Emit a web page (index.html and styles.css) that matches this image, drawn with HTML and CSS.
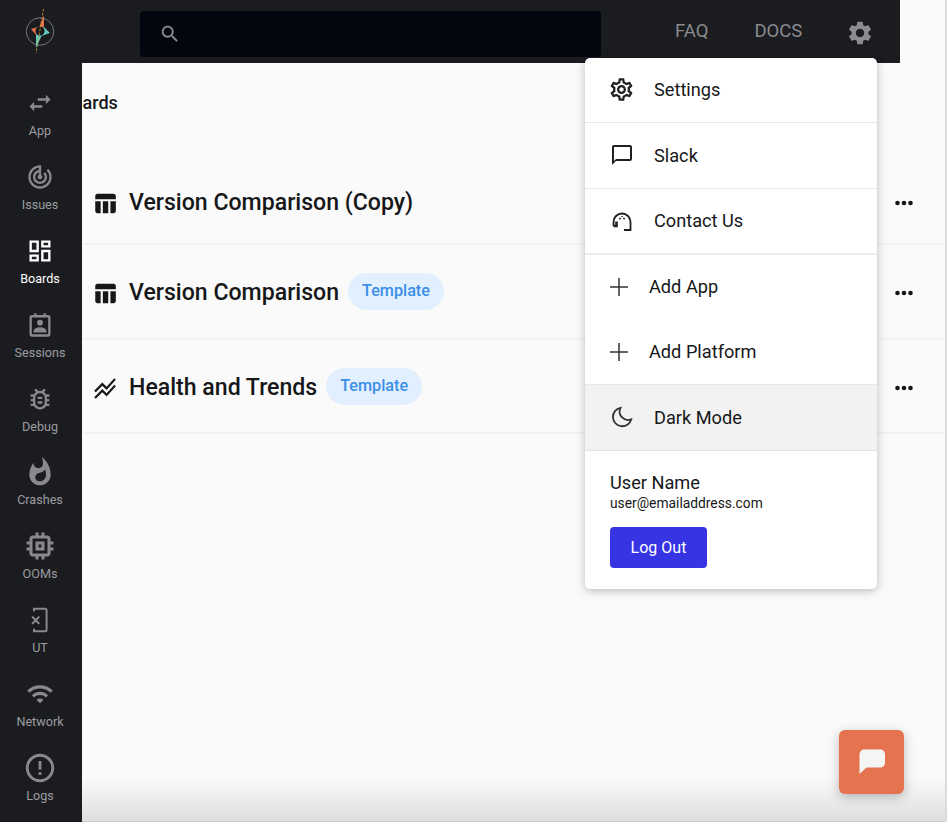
FILE: index.html
```html
<!DOCTYPE html>
<html lang="en">
<head>
    <meta charset="UTF-8">
    <meta name="viewport" content="width=device-width, initial-scale=1.0">
    <title>Boards</title>
    <link rel="stylesheet" href="styles.css">
</head>
<body>
    <div class="app">
        <aside class="sidebar">
            <div class="logo">
                <svg width="50" height="50" viewBox="15 5 50 50">
                    <circle cx="40" cy="30.5" r="13.7" fill="none" stroke="#8c8d8f" stroke-width="0.8"/>
                    <path d="M44 14L44 26L36 34L31 28L39.500 25.500Z" fill="#e57350"/>
                    <path d="M44 26L50 32L41.500 35L36 47L36 34Z" fill="#63c7bd"/>
                    <circle cx="40" cy="30" r="4.600" fill="#1a1c20"/>
                    <path d="M43.500 8L36 52" stroke="#d6a528" stroke-width="0.8" stroke-dasharray="2.500 1.500"/>
                </svg>
            </div>
            <nav class="nav">
                <a class="nav-item">
                    <svg viewBox="0 0 24 24"><path d="M6.990 11L3 15l3.990 4v-3H14v-2H6.990v-3zM21 9l-3.990-4v3H10v2h7.010v3L21 9z"/></svg>
                    <span>App</span>
                </a>
                <a class="nav-item">
                    <svg viewBox="0 0 24 24"><path d="M19.070 4.930l-1.410 1.410C19.100 7.790 20 9.790 20 12c0 4.420-3.580 8-8 8s-8-3.580-8-8c0-4.080 3.050-7.440 7-7.930v2.020C8.160 6.570 6 9.030 6 12c0 3.310 2.690 6 6 6s6-2.690 6-6c0-1.660-.67-3.160-1.760-4.240l-1.410 1.410C15.550 9.900 16 10.900 16 12c0 2.210-1.790 4-4 4s-4-1.790-4-4c0-1.860 1.280-3.410 3-3.860v2.140c-.6.35-1 .98-1 1.720 0 1.100.9 2 2 2s2-.9 2-2c0-.74-.4-1.380-1-1.720V2h-1C6.480 2 2 6.480 2 12s4.480 10 10 10 10-4.480 10-10c0-2.760-1.120-5.260-2.930-7.070z"/></svg>
                    <span>Issues</span>
                </a>
                <a class="nav-item active">
                    <svg viewBox="0 0 24 24"><path d="M19 5v2h-4V5h4M9 5v6H5V5h4m10 8v6h-4v-6h4M9 17v2H5v-2h4M21 3h-8v6h8V3zM11 3H3v10h8V3zm10 8h-8v10h8V11zm-10 4H3v6h8v-6z"/></svg>
                    <span>Boards</span>
                </a>
                <a class="nav-item">
                    <svg viewBox="0 0 24 24"><path d="M7 2h2v1.500h6V2h2v1.500h2c1.100 0 2 .9 2 2V20c0 1.100-.9 2-2 2H5c-1.100 0-2-.9-2-2V5.500c0-1.100.9-2 2-2h2V2zM5 5.500V20h14V5.500H5z"/><circle cx="12" cy="10" r="2.500"/><path d="M6.500 17.500c0-2.300 3.100-3.500 5.500-3.500s5.500 1.200 5.500 3.500V18.500h-11v-1z"/></svg>
                    <span>Sessions</span>
                </a>
                <a class="nav-item">
                    <svg viewBox="0 0 24 24"><path d="M20 8h-2.810c-.45-.78-1.070-1.450-1.820-1.960L17 4.410 15.590 3l-2.170 2.170C12.960 5.060 12.490 5 12 5s-.96.06-1.410.17L8.410 3 7 4.410l1.620 1.630C7.880 6.550 7.260 7.220 6.810 8H4v2h2.090c-.05.33-.09.66-.09 1v1H4v2h2v1c0 .34.04.67.09 1H4v2h2.810c1.040 1.790 2.970 3 5.190 3s4.150-1.210 5.190-3H20v-2h-2.090c.05-.33.09-.66.09-1v-1h2v-2h-2v-1c0-.34-.04-.67-.09-1H20V8zm-4 7c0 2.210-1.790 4-4 4s-4-1.790-4-4v-4c0-2.210 1.790-4 4-4s4 1.790 4 4v4zm-6-1h4v2h-4zm0-4h4v2h-4z"/></svg>
                    <span>Debug</span>
                </a>
                <a class="nav-item">
                    <svg class="icon-32" viewBox="0 0 24 24"><path d="M13.500.67s.74 2.650.74 4.800c0 2.060-1.350 3.730-3.410 3.730-2.070 0-3.630-1.670-3.630-3.730l.03-.36C5.210 7.510 4 10.620 4 14c0 4.420 3.580 8 8 8s8-3.580 8-8C20 8.610 17.410 3.800 13.500.67zM11.710 19c-1.780 0-3.220-1.400-3.220-3.140 0-1.620 1.050-2.760 2.810-3.120 1.770-.36 3.600-1.210 4.620-2.580.39 1.290.59 2.650.59 4.040 0 2.650-2.150 4.800-4.800 4.800z"/></svg>
                    <span>Crashes</span>
                </a>
                <a class="nav-item">
                    <svg class="icon-36" viewBox="0 0 24 24"><path d="M15 9H9v6h6V9zm-2 4h-2v-2h2v2zm8-2V9h-2V7c0-1.100-.9-2-2-2h-2V3h-2v2h-2V3H9v2H7c-1.100 0-2 .9-2 2v2H3v2h2v2H3v2h2v2c0 1.100.9 2 2 2h2v2h2v-2h2v2h2v-2h2c1.100 0 2-.9 2-2v-2h2v-2h-2v-2h2zm-4 6H7V7h10v10z"/></svg>
                    <span>OOMs</span>
                </a>
                <a class="nav-item">
                    <svg viewBox="0 0 24 24"><path d="M6 1.500h10.500c1.100 0 2 .9 2 2v17c0 1.100-.9 2-2 2H6v-3h1.700v1.300h9.100V3.200H7.700v1.300H6v-3z"/><path d="M5.800 8.500l2.500 2.500 2.500-2.500 1.200 1.200L9.500 12.200l2.500 2.500-1.200 1.200-2.500-2.500-2.500 2.500-1.200-1.200 2.500-2.500-2.500-2.500z"/></svg>
                    <span>UT</span>
                </a>
                <a class="nav-item">
                    <svg viewBox="0 0 24 24"><path d="M1 9l2 2c4.970-4.970 13.030-4.970 18 0l2-2C16.930 2.930 7.080 2.930 1 9zm8 8l3 3 3-3c-1.650-1.660-4.340-1.660-6 0zm-4-4l2 2c2.760-2.760 7.240-2.760 10 0l2-2C15.140 9.140 8.870 9.140 5 13z"/></svg>
                    <span>Network</span>
                </a>
                <a class="nav-item">
                    <svg class="icon-34" viewBox="0 0 24 24"><path d="M11 15h2v2h-2zm0-8h2v6h-2zm.99-5C6.470 2 2 6.480 2 12s4.470 10 9.990 10C17.520 22 22 17.520 22 12S17.520 2 11.990 2zM12 20c-4.420 0-8-3.580-8-8s3.580-8 8-8 8 3.580 8 8-3.580 8-8 8z"/></svg>
                    <span>Logs</span>
                </a>
            </nav>
        </aside>

        <main class="main">
            <header class="topbar">
                <div class="search">
                    <svg viewBox="0 0 24 24"><path d="M15.500 14h-.79l-.28-.27C15.410 12.590 16 11.110 16 9.500 16 5.910 13.090 3 9.500 3S3 5.910 3 9.500 5.910 16 9.500 16c1.610 0 3.090-.59 4.230-1.570l.27.28v.79l5 4.990L20.490 19l-4.990-5zm-6 0C7.010 14 5 11.990 5 9.500S7.010 5 9.500 5 14 7.010 14 9.500 11.990 14 9.500 14z"/></svg>
                </div>
                <a class="top-link faq">FAQ</a>
                <a class="top-link docs">DOCS</a>
                <svg class="top-gear" viewBox="0 0 24 24"><path d="M19.140 12.940c.04-.3.06-.61.06-.94 0-.32-.02-.64-.07-.94l2.030-1.580c.18-.14.23-.41.12-.61l-1.920-3.320c-.12-.22-.37-.29-.59-.22l-2.390.96c-.5-.38-1.030-.7-1.620-.94l-.36-2.540c-.04-.24-.24-.41-.48-.41h-3.840c-.24 0-.43.17-.47.41l-.36 2.540c-.59.24-1.130.57-1.620.94l-2.390-.96c-.22-.08-.47 0-.59.22L2.740 8.870c-.12.21-.08.47.12.61l2.030 1.580c-.05.3-.09.63-.09.94s.02.64.07.94l-2.030 1.580c-.18.14-.23.41-.12.61l1.920 3.320c.12.22.37.29.59.22l2.390-.96c.5.38 1.030.7 1.620.94l.36 2.540c.05.24.24.41.48.41h3.840c.24 0 .44-.17.47-.41l.36-2.540c.59-.24 1.130-.56 1.620-.94l2.390.96c.22.08.47 0 .59-.22l1.920-3.320c.12-.22.07-.47-.12-.61l-2.010-1.580zM12 15.600c-1.980 0-3.600-1.620-3.600-3.600s1.620-3.600 3.600-3.600 3.600 1.620 3.600 3.600-1.620 3.600-3.600 3.600z"/></svg>
            </header>

            <section class="content">
                <h2 class="page-title">Boards</h2>
                <div class="board-list">
                    <div class="board-row">
                        <svg class="board-icon" viewBox="0 0 24 24"><path d="M10 10.020h5V21h-5zM17 21h3c1.100 0 2-.9 2-2v-9h-5v11zm3-18H5c-1.100 0-2 .9-2 2v3h19V5c0-1.100-.9-2-2-2zM3 19c0 1.100.9 2 2 2h3V10H3v9z"/></svg>
                        <span class="board-name">Version Comparison (Copy)</span>
                        <svg class="more" viewBox="0 0 18 6"><circle cx="2.500" cy="3" r="2.300"/><circle cx="9" cy="3" r="2.300"/><circle cx="15.500" cy="3" r="2.300"/></svg>
                    </div>
                    <div class="board-row">
                        <svg class="board-icon" viewBox="0 0 24 24"><path d="M10 10.020h5V21h-5zM17 21h3c1.100 0 2-.9 2-2v-9h-5v11zm3-18H5c-1.100 0-2 .9-2 2v3h19V5c0-1.100-.9-2-2-2zM3 19c0 1.100.9 2 2 2h3V10H3v9z"/></svg>
                        <span class="board-name">Version Comparison</span>
                        <span class="badge">Template</span>
                        <svg class="more" viewBox="0 0 18 6"><circle cx="2.500" cy="3" r="2.300"/><circle cx="9" cy="3" r="2.300"/><circle cx="15.500" cy="3" r="2.300"/></svg>
                    </div>
                    <div class="board-row last">
                        <svg class="board-icon" viewBox="0 0 24 24"><path d="M2 19.990l7.500-7.510 4 4 7.090-7.970L22 9.920l-8.500 9.560-4-4-6 6.010-1.500-1.500zm1.500-4.500l6-6.010 4 4L22 3.920l-1.410-1.410-7.090 7.970-4-4L2 13.990l1.500 1.500z"/></svg>
                        <span class="board-name">Health and Trends</span>
                        <span class="badge">Template</span>
                        <svg class="more" viewBox="0 0 18 6"><circle cx="2.500" cy="3" r="2.300"/><circle cx="9" cy="3" r="2.300"/><circle cx="15.500" cy="3" r="2.300"/></svg>
                    </div>
                </div>
            </section>
        </main>
    </div>

    <!-- settings dropdown -->
    <div class="menu">
        <a class="menu-item line settings-row">
            <svg class="gear" viewBox="0 0 24 24"><path d="M19.430 12.980c.04-.32.07-.64.07-.98 0-.34-.03-.66-.07-.98l2.110-1.650c.19-.15.24-.42.12-.64l-2-3.460c-.09-.16-.26-.25-.44-.25-.06 0-.12.01-.17.03l-2.490 1c-.52-.4-1.080-.73-1.690-.98l-.38-2.650C14.460 2.180 14.250 2 14 2h-4c-.25 0-.46.18-.49.42l-.38 2.650c-.61.25-1.170.59-1.690.98l-2.490-1c-.06-.02-.12-.03-.18-.03-.17 0-.34.09-.43.25l-2 3.460c-.13.22-.07.49.12.64l2.110 1.650c-.04.32-.07.65-.07.98 0 .33.03.66.07.98l-2.110 1.650c-.19.15-.24.42-.12.64l2 3.460c.09.16.26.25.44.25.06 0 .12-.01.17-.03l2.490-1c.52.4 1.080.73 1.690.98l.38 2.650c.03.24.24.42.49.42h4c.25 0 .46-.18.49-.42l.38-2.650c.61-.25 1.170-.59 1.690-.98l2.490 1c.06.02.12.03.18.03.17 0 .34-.09.43-.25l2-3.460c.12-.22.07-.49-.12-.64l-2.110-1.650zm-1.980-1.710c.04.31.05.52.05.73 0 .21-.02.43-.05.73l-.14 1.130.89.7 1.080.84-.7 1.210-1.270-.51-1.040-.42-.9.68c-.43.32-.84.56-1.250.73l-1.060.43-.16 1.130-.2 1.350h-1.400l-.19-1.350-.16-1.130-1.060-.43c-.43-.18-.83-.41-1.230-.71l-.91-.7-1.060.43-1.270.51-.7-1.210 1.080-.84.89-.7-.14-1.130c-.03-.31-.05-.54-.05-.74s.02-.43.05-.73l.14-1.130-.89-.7-1.080-.84.7-1.210 1.270.51 1.040.42.9-.68c.43-.32.84-.56 1.250-.73l1.060-.43.16-1.130.2-1.350h1.390l.19 1.350.16 1.130 1.060.43c.43.18.83.41 1.230.71l.91.7 1.060-.43 1.270-.51.7 1.210-1.070.85-.89.7.14 1.130zM12 8c-2.210 0-4 1.790-4 4s1.790 4 4 4 4-1.790 4-4-1.790-4-4-4zm0 6c-1.100 0-2-.9-2-2s.9-2 2-2 2 .9 2 2-.9 2-2 2z"/></svg>
            <span>Settings</span>
        </a>
        <a class="menu-item line slack-row">
            <svg viewBox="0 0 24 24"><path d="M20 2H4c-1.100 0-2 .9-2 2v18l4-4h14c1.100 0 2-.9 2-2V4c0-1.100-.9-2-2-2zm0 14H6l-2 2V4h16v12z"/></svg>
            <span>Slack</span>
        </a>
        <a class="menu-item line-thick contact-row">
            <svg viewBox="0 0 24 24" class="stroked"><path d="M3.500 17v-4a8.500 8.500 0 0 1 17 0v8h-6.500"/><path d="M3.500 17h3v-4.500" stroke-width="2.600"/><path d="M9.500 9l1 1.200M14.500 9l-1 1.200M12 7v.8"/></svg>
            <span>Contact Us</span>
        </a>
        <a class="menu-item add add-app">
            <svg viewBox="0 0 24 24" class="stroked plus"><path d="M12 3v18M3 12h18"/></svg>
            <span>Add App</span>
        </a>
        <a class="menu-item add add-platform">
            <svg viewBox="0 0 24 24" class="stroked plus"><path d="M12 3v18M3 12h18"/></svg>
            <span>Add Platform</span>
        </a>
        <a class="menu-item hovered">
            <svg viewBox="0 0 24 24" class="stroked"><path d="M10.500 2.800a9.300 9.300 0 1 0 10.700 11.600a8.500 8.500 0 0 1-10.700-11.600z"/></svg>
            <span>Dark Mode</span>
        </a>
        <div class="user-box">
            <div class="user-name">User Name</div>
            <div class="user-email">user@emailaddress.com</div>
            <button class="logout">Log Out</button>
        </div>
    </div>

    <button class="chat-btn">
        <svg width="30" height="28" viewBox="0 0 30 28"><path d="M7 1.500h16c3 0 5 2 5 5v8c0 3-2 5-5 5H9.500l-7 6.500V6.500c0-3 2-5 4.500-5z" fill="#f5f5f5"/></svg>
    </button>
</body>
</html>
```

FILE: styles.css
```css
* {
    box-sizing: border-box;
}
body {
    font-family: Roboto, "Liberation Sans", sans-serif;
    margin: 0;
    background-color: white;
    color: #161718;
    height: 824px;
    overflow: hidden;
}
svg {
    fill: currentColor;
    display: block;
}
.app {
    display: flex;
    height: 822px;
}

/* sidebar */
.sidebar {
    width: 82px;
    flex-shrink: 0;
    background-color: #1a1c20;
    padding-right: 2px;
    position: relative;
    z-index: 2;
}
.logo {
    height: 89px;
    display: flex;
    justify-content: center;
    padding-top: 6px;
}
.nav {
    display: flex;
    flex-direction: column;
}
.nav-item {
    height: 73.9px;
    display: flex;
    flex-direction: column;
    align-items: center;
    gap: 6px;
    color: #88898c;
    font-size: 12.6px;
    line-height: 16px;
}
.nav-item span {
    color: #9c9d9f;
}
.nav-item svg {
    width: 28px;
    height: 28px;
}
.nav-item svg.icon-32 {
    width: 32px;
    height: 32px;
    margin: -2px 0;
}
.nav-item svg.icon-34 {
    width: 34px;
    height: 34px;
    margin: -3px 0;
}
.nav-item svg.icon-36 {
    width: 36px;
    height: 36px;
    margin: -4px 0;
}
.nav-item.active,
.nav-item.active span {
    color: white;
}

/* main area */
.main {
    flex: 1;
    display: flex;
    flex-direction: column;
    background-color: #fafafa;
    border-right: 2px solid #dcdcde;
    position: relative;
    margin-right: 1px;
}
.main::after {
    content: "";
    position: absolute;
    left: 0;
    right: 0;
    bottom: 0;
    height: 44px;
    background: linear-gradient(to bottom, rgba(222, 222, 222, 0), #dedede);
    border-bottom: 1px solid #c9c9c9;
    pointer-events: none;
    z-index: 3;
}
.topbar {
    width: 818px;
    height: 63px;
    flex-shrink: 0;
    background-color: #1a1c20;
    display: flex;
    align-items: center;
    padding: 2px 0 0 58px;
}
.search {
    width: 461px;
    height: 46px;
    margin-top: 3px;
    background-color: #03050f;
    border-radius: 4px;
    display: flex;
    align-items: center;
    padding-left: 19px;
    color: #8c8d90;
}
.search svg {
    width: 22px;
    height: 22px;
}
.top-link {
    font-size: 18.5px;
    color: #8a8b8e;
    margin-top: -3px;
}
.faq {
    margin-left: 74px;
}
.docs {
    margin-left: 46px;
}
.top-gear {
    width: 28px;
    height: 28px;
    margin-left: 44px;
    color: #8b8c8f;
}

/* boards list */
.content {
    flex: 1;
}
.page-title {
    font-size: 18px;
    font-weight: 500;
    line-height: 24px;
    margin: 28px 0 45px -21px;
}
.board-list {
    display: flex;
    flex-direction: column;
}
.board-row {
    display: flex;
    align-items: center;
    padding: 28px 32px 28px 10px;
    border-bottom: 2px solid #f2f2f2;
}
.board-row.last {
    padding-bottom: 27px;
}
.board-icon {
    width: 26px;
    height: 26px;
    margin-right: 11px;
    flex-shrink: 0;
    transform: translateY(1.5px);
}
.board-name {
    font-size: 23.1px;
    font-weight: 500;
    line-height: 25px;
    padding-top: 2px;
}
.badge {
    margin-left: 9px;
    height: 37px;
    padding: 0 14px;
    border-radius: 19px;
    background-color: #e1effe;
    color: #3b8fe8;
    font-size: 16.2px;
    font-weight: 500;
    line-height: 36px;
}
.more {
    width: 18px;
    height: 6px;
    margin-left: auto;
    margin-top: 2px;
    color: #161718;
}

/* dropdown */
.menu {
    position: absolute;
    left: 585px;
    top: 58px;
    width: 292px;
    height: 531px;
    background-color: white;
    border-radius: 5px;
    box-shadow: 0 2px 10px rgba(0, 0, 0, 0.25);
    z-index: 4;
}
.menu-item {
    display: flex;
    align-items: center;
    padding-left: 24px;
    font-size: 18.2px;
}
.menu-item svg {
    width: 24px;
    height: 24px;
    margin-left: 1px;
    margin-right: 20px;
    color: #1f2023;
}
.menu-item svg.gear {
    width: 27px;
    height: 27px;
    margin-left: -1px;
    margin-right: 19px;
}
.settings-row {
    height: 64.5px;
}
.slack-row {
    height: 66px;
}
.contact-row {
    height: 66.5px;
}
.add-app {
    height: 64px;
    padding-bottom: 1px;
}
.add-platform {
    height: 65px;
}
.menu-item.line {
    border-bottom: 1px solid #e6e6e6;
}
.menu-item.line-thick {
    border-bottom: 2px solid #ececec;
}
.menu-item.hovered {
    height: 67px;
    padding-bottom: 1px;
    background-color: #f2f2f2;
    border-top: 1px solid #e8e8e8;
    border-bottom: 1px solid #e4e4e4;
}
.stroked {
    fill: none;
    stroke: currentColor;
    stroke-width: 1.800;
}
.menu-item .plus {
    stroke-width: 1.500;
    color: #333;
    margin-right: 18px;
    margin-left: -2px;
}
.hovered svg {
    color: #333;
}
.user-box {
    padding: 21px 25px 0;
}
.user-name {
    font-size: 18.2px;
    line-height: 22px;
}
.user-email {
    font-size: 13.8px;
    line-height: 18px;
}
.logout {
    display: block;
    margin-top: 15px;
    width: 97px;
    height: 41px;
    background-color: #3634e3;
    color: white;
    border: none;
    border-radius: 4px;
    font-family: inherit;
    font-size: 16px;
}

.chat-btn {
    position: absolute;
    left: 839px;
    top: 730px;
    width: 65px;
    height: 64px;
    background-color: #e57350;
    border: none;
    border-radius: 6px;
    box-shadow: 0 3px 12px rgba(0, 0, 0, 0.25);
    display: flex;
    align-items: center;
    justify-content: center;
    padding: 0;
    z-index: 4;
}
```
